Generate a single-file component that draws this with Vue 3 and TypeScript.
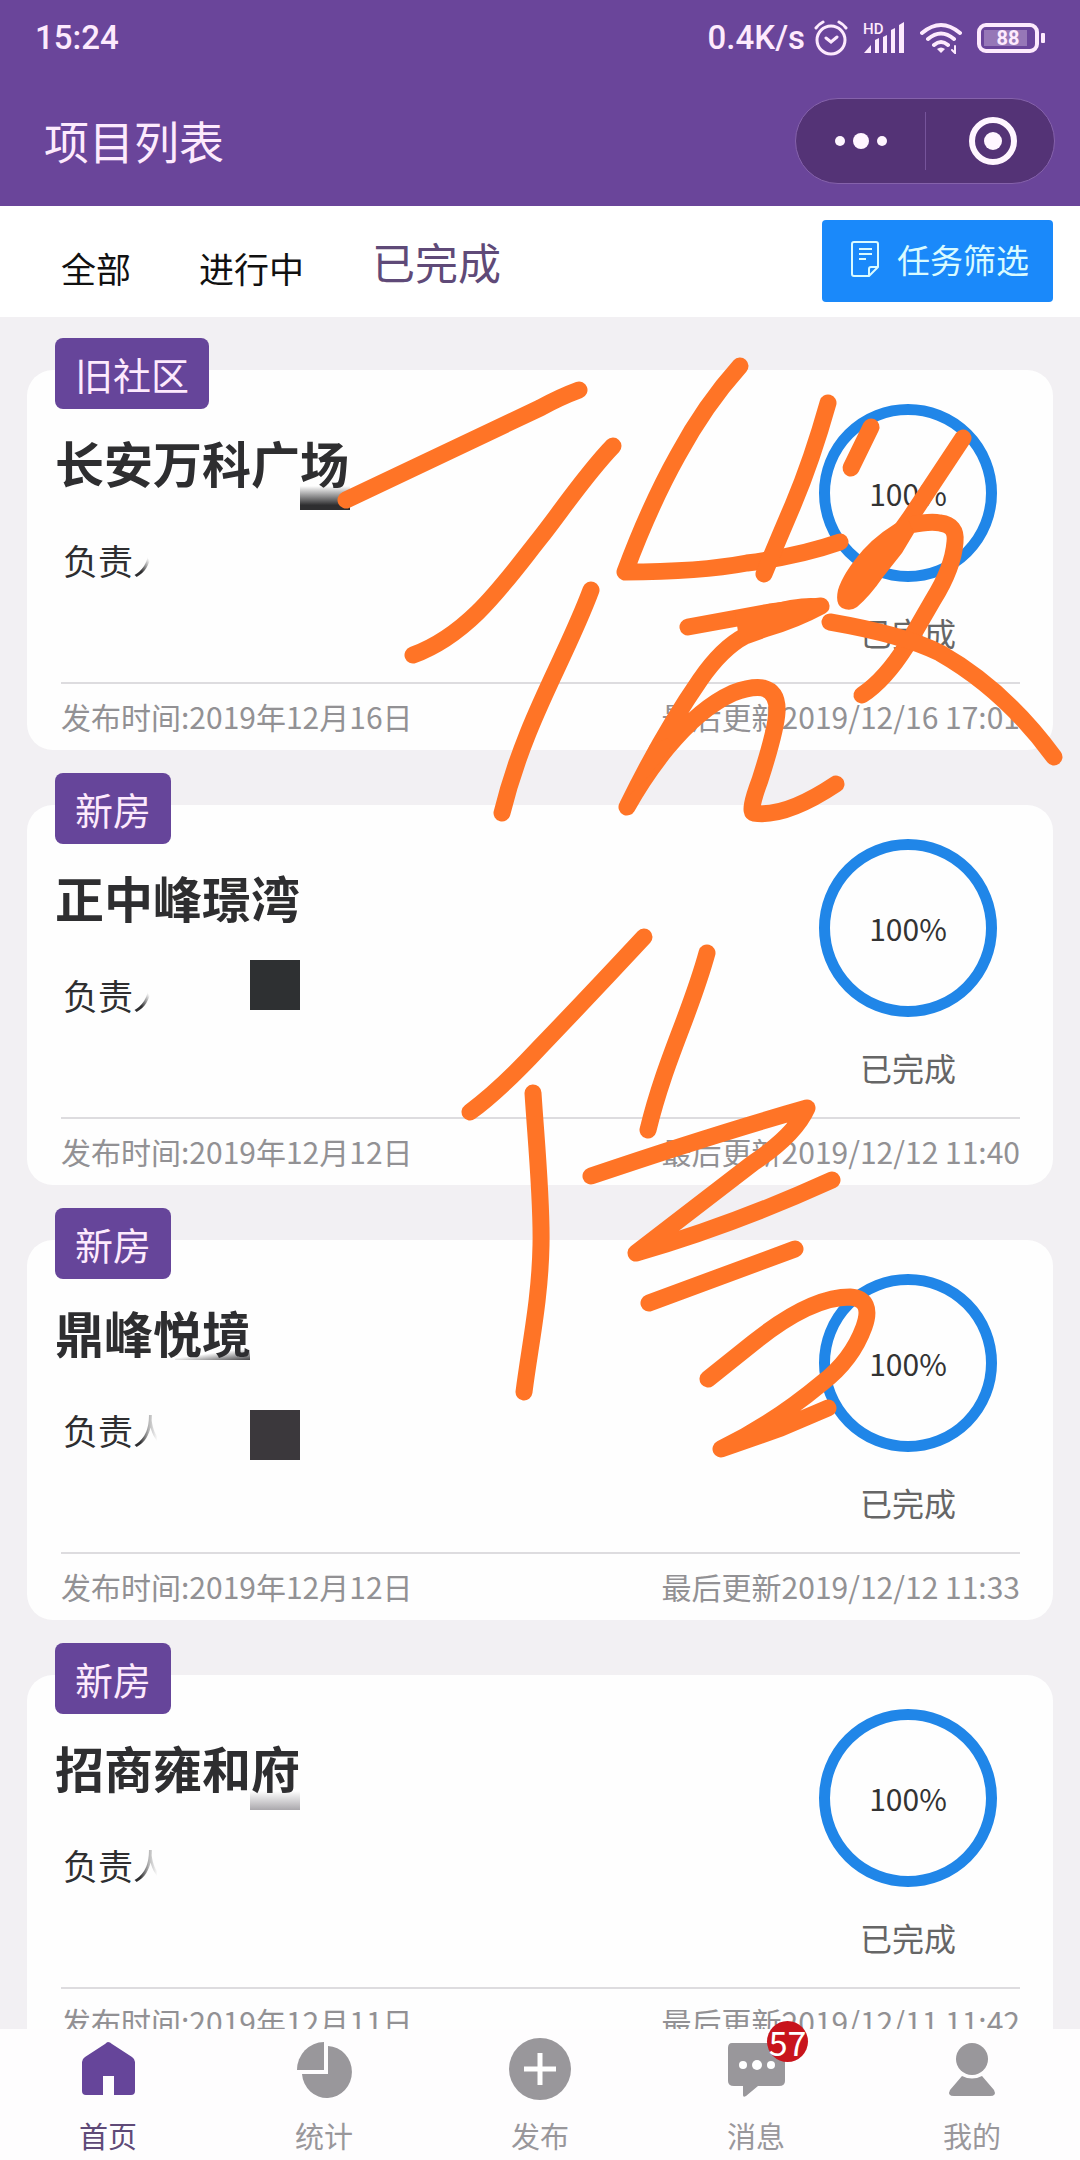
<script setup lang="ts">
import { ref } from 'vue'

interface Project {
  kind: string
  name: string
  published: string
  updated: string
  percent: number
  fade: 'short' | 'long'
}

const projects: Project[] = [
  { kind: '旧社区', name: '长安万科广场', published: '2019年12月16日', updated: '2019/12/16 17:01', percent: 100, fade: 'short' },
  { kind: '新房', name: '正中峰璟湾', published: '2019年12月12日', updated: '2019/12/12 11:40', percent: 100, fade: 'short' },
  { kind: '新房', name: '鼎峰悦境', published: '2019年12月12日', updated: '2019/12/12 11:33', percent: 100, fade: 'long' },
  { kind: '新房', name: '招商雍和府', published: '2019年12月11日', updated: '2019/12/11 11:42', percent: 100, fade: 'long' },
]

const filters = ['全部', '进行中', '已完成']
const activeFilter = ref('已完成')

const tabs = [
  { id: 'home', label: '首页' },
  { id: 'stats', label: '统计' },
  { id: 'publish', label: '发布' },
  { id: 'message', label: '消息', badge: 57 },
  { id: 'mine', label: '我的' },
]
const activeTab = ref('home')

const strokes = [
  'M579 390 Q560 397 540 408 L346 500',
  'M613 446 C585 475 560 513 540 538 C505 582 470 634 413 655',
  'M591 590 C565 660 525 720 502 813',
  'M740 366 Q705 405 678 455 Q650 505 625 572 Q700 572 747 563 Q800 556 840 542',
  'M828 403 Q812 460 793 505 Q778 540 764 574',
  'M871 427 L851 468',
  'M963 438 L910 518 L880 560',
  'M910 525 Q930 521 940 523 Q957 525 955 542 Q953 568 933 600 L907 645 Q885 680 862 695',
  'M830 622 Q905 635 940 653 Q1005 690 1054 757',
  'M688 627 L770 612 Q800 608 821 606 Q795 620 767 628 L745 636 Q722 648 700 680 Q662 735 627 807 Q645 775 667 748 Q700 708 733 693 Q752 686 763 688 Q778 692 777 712 Q776 730 760 780 Q748 812 754 813 Q785 818 836 784',
  'M644 937 Q590 995 540 1047 Q500 1090 470 1112',
  'M533 1093 C536 1140 542 1200 541 1245 C540 1300 530 1345 524 1392',
  'M707 953 C690 1015 665 1060 648 1130',
  'M591 1176 Q712 1135 807 1108 Q795 1135 753 1163 L636 1253 Q733 1225 832 1180',
  'M795 1249 L649 1303',
  'M708 1379 L753 1343 Q810 1297 850 1297 Q874 1299 864 1327 Q852 1360 822 1383 Q774 1423 721 1449 L781 1428 L828 1408',
]
</script>

<template>
  <div class="screen">
    <header class="top">
      <div class="status">
        <span>15:24</span>
        <div class="status-right">
          <span>0.4K/s</span>
          <div class="status-icons">
            <svg width="34" height="36" viewBox="0 0 34 36" fill="none" stroke="currentColor" stroke-width="3" stroke-linecap="round">
              <circle cx="17" cy="20" r="14" />
              <path d="M12 18l5 4 6-5M2 8q3-4 7-6M32 8q-3-4-7-6" />
            </svg>
            <svg width="42" height="36" viewBox="0 0 42 36" fill="currentColor">
              <text x="0" y="14" font-size="15">HD</text>
              <path d="M1 33l7-8v8zM12 20l4-2v15h-4zM20 17l4-2v18h-4zM28 10l4-2v25h-4zM36 5l5-3v31h-5z" />
            </svg>
            <svg width="42" height="32" viewBox="0 0 42 32" fill="none" stroke="currentColor" stroke-width="4" stroke-linecap="round">
              <path d="M2 11Q21-5 40 11M8 17Q21 6 34 17M14 23Q21 17 28 23" />
              <path d="M17 27q4-3 8 0l-4 4z" fill="currentColor" stroke="none" />
              <path d="M35 24v7l-3-3" stroke-width="2" />
            </svg>
            <svg width="68" height="30" viewBox="0 0 68 30">
              <rect x="2" y="2" width="58" height="26" rx="7" fill="none" stroke="currentColor" stroke-width="4" />
              <rect x="7" y="7" width="43" height="16" fill="currentColor" opacity=".3" />
              <rect x="64" y="10" width="4" height="10" rx="1" fill="currentColor" />
              <text x="31" y="22" font-size="20" font-weight="700" text-anchor="middle" fill="currentColor">88</text>
            </svg>
          </div>
        </div>
      </div>
      <div class="navbar">
        <h1>项目列表</h1>
        <div class="capsule">
          <button type="button" aria-label="更多">
            <svg width="52" height="20" viewBox="0 0 52 20" fill="currentColor">
              <circle cx="5" cy="10" r="5" /><circle cx="26" cy="10" r="8" /><circle cx="47" cy="10" r="5" />
            </svg>
          </button>
          <button type="button" aria-label="关闭">
            <svg width="48" height="48" viewBox="0 0 48 48">
              <circle cx="24" cy="24" r="21" fill="none" stroke="currentColor" stroke-width="6" />
              <circle cx="24" cy="24" r="9" fill="currentColor" />
            </svg>
          </button>
        </div>
      </div>
    </header>

    <div class="toolbar">
      <div class="filters">
        <button
          v-for="f in filters"
          :key="f"
          type="button"
          :class="{ active: f === activeFilter }"
          @click="activeFilter = f"
        >{{ f }}</button>
      </div>
      <button type="button" class="task-filter">
        <svg width="28" height="36" viewBox="0 0 28 36" fill="none" stroke="currentColor" stroke-width="2" stroke-linejoin="round">
          <path d="M3 1h22q2 0 2 2v23l-9 9H3q-2 0-2-2V3q0-2 2-2zM18 35v-7q0-2 2-2h7M8 8h13M8 13h13M8 18h7" />
        </svg>
        <span>任务筛选</span>
      </button>
    </div>

    <main class="list">
      <article v-for="p in projects" :key="p.name" class="card">
        <div class="body">
          <div class="info">
            <span class="tag">{{ p.kind }}</span>
            <h2>{{ p.name }}</h2>
            <p class="owner">负责<span :class="p.fade">人</span></p>
          </div>
          <div class="progress">
            <div class="ring">{{ p.percent }}%</div>
            <span class="state">已完成</span>
          </div>
        </div>
        <footer>
          <span>发布时间:{{ p.published }}</span>
          <span>最后更新{{ p.updated }}</span>
        </footer>
      </article>
    </main>

    <nav class="tabbar">
      <button
        v-for="t in tabs"
        :key="t.id"
        type="button"
        :class="{ active: t.id === activeTab }"
        @click="activeTab = t.id"
      >
        <span class="icon">
          <svg width="62" height="62" viewBox="0 0 62 62" fill="currentColor">
            <path v-if="t.id === 'home'" d="M31 4q2 0 4 2l20 13q3 2 3 5v29q0 4-4 4H37V38H26v19H9q-4 0-4-4V24q0-3 3-5L28 6q2-2 3-2z" />
            <template v-else-if="t.id === 'stats'">
              <path d="M31 4v28H4A27 28 0 0 1 31 4z" />
              <path d="M35 8A25 26 0 1 1 9 36h26z" />
            </template>
            <template v-else-if="t.id === 'publish'">
              <circle cx="31" cy="31" r="31" />
              <path d="M31 15v32M15 31h32" stroke="#fff" stroke-width="5" />
            </template>
            <template v-else-if="t.id === 'message'">
              <path d="M7 5h47q6 0 6 5v33q0 5-6 5H33L21 58q-3 2-3-1v-9H9q-6 0-6-5V10q0-5 4-5z" />
              <g fill="#fff"><circle cx="18" cy="27" r="4" /><circle cx="32" cy="27" r="5" /><circle cx="46" cy="27" r="4" /></g>
            </template>
            <template v-else>
              <circle cx="31" cy="21" r="16" />
              <path d="M21 38q10 5 20 0l12 14q3 6-4 6H13q-7 0-4-6z" />
            </template>
          </svg>
          <span v-if="t.badge" class="badge">{{ t.badge }}</span>
        </span>
        <span class="label">{{ t.label }}</span>
      </button>
    </nav>

    <svg class="ink" viewBox="0 0 1080 2160" preserveAspectRatio="xMidYMin meet" aria-hidden="true">
      <defs>
        <linearGradient id="smudge" x1="0" y1="0" x2="0" y2="1">
          <stop offset="0" stop-color="#2e2e30" stop-opacity="0" />
          <stop offset=".8" stop-color="#2e2e30" />
        </linearGradient>
        <linearGradient id="smudge-corner" x1="0" y1="0" x2="1" y2="1">
          <stop offset=".4" stop-color="#2e2e30" stop-opacity="0" />
          <stop offset="1" stop-color="#2e2e30" stop-opacity=".9" />
        </linearGradient>
        <linearGradient id="smudge-light" x1="0" y1="0" x2="0" y2="1">
          <stop offset="0" stop-color="#aaa8ac" stop-opacity="0" />
          <stop offset="1" stop-color="#aaa8ac" />
        </linearGradient>
      </defs>
      <rect x="300" y="486" width="50" height="24" fill="url(#smudge)" />
      <g fill="none" stroke="#ff7426" stroke-width="17" stroke-linecap="round" stroke-linejoin="round">
        <path v-for="(d, i) in strokes" :key="i" :d="d" />
      </g>
      <path fill="#ff7426" d="M907 517Q880 531 863 550Q843 573 838 590Q835 604 842 608Q850 612 857 607Q870 596 883 577L902 553L914 533zM735 612L790 600Q815 596 824 600L828 610L785 630L740 645zM624 800L650 745L668 738L672 746L650 775z" />
      <rect x="250" y="960" width="50" height="50" fill="#2e3032" />
      <rect x="175" y="1350" width="75" height="10" fill="url(#smudge-corner)" />
      <rect x="250" y="1410" width="50" height="50" fill="#3b383c" />
      <rect x="250" y="1791" width="50" height="19" fill="url(#smudge-light)" />
    </svg>
  </div>
</template>

<style>
body {
  margin: 0;
}
</style>

<style scoped>
.screen {
  position: relative;
  display: flex;
  flex-direction: column;
  height: 100vh;
  overflow: hidden;
  background: #f2f0f3;
  color: #2e2e30;
  font-family: "Noto Sans CJK SC", "Noto Sans", sans-serif;
}

button {
  margin: 0;
  padding: 0;
  border: 0;
  background: none;
  color: inherit;
  font: inherit;
  cursor: pointer;
}

svg {
  display: block;
}

h1,
h2,
p {
  margin: 0;
}

.top {
  background: #6a459a;
  color: #fdeafd;
}

.status {
  display: flex;
  align-items: center;
  justify-content: space-between;
  height: 76px;
  padding: 0 35px;
  font: 500 33px/40px Roboto, sans-serif;
}

.status-right {
  display: flex;
  align-items: center;
  gap: 9px;
}

.status-icons {
  display: flex;
  align-items: center;
  gap: 15px;
}

.navbar {
  display: flex;
  align-items: center;
  justify-content: space-between;
  height: 130px;
  padding: 0 25px 0 44px;
}

.navbar h1 {
  font-size: 45px;
  line-height: 60px;
  font-weight: 400;
}

.capsule {
  display: flex;
  align-items: center;
  box-sizing: border-box;
  width: 260px;
  height: 86px;
  border: 1px solid #8562ab;
  border-radius: 43px;
  background: #543376;
  color: #fff6ff;
}

.capsule button {
  display: grid;
  place-items: center;
  flex: none;
  width: 50%;
  height: 58px;
}

.capsule button + button {
  padding-left: 6px;
  border-left: 1px solid #76549b;
}

.toolbar {
  display: flex;
  align-items: center;
  justify-content: space-between;
  height: 109px;
  padding: 0 27px 2px 61px;
  background: #fff;
}

.filters {
  display: flex;
  align-items: flex-end;
  gap: 68px;
  height: 54px;
  color: #111;
  font-size: 35px;
  line-height: 40px;
}

.filters .active {
  color: #5f4a78;
  font-size: 43px;
  line-height: 53px;
}

.task-filter {
  display: flex;
  align-items: center;
  gap: 18px;
  height: 82px;
  padding: 0 24px 3px 29px;
  border-radius: 4px;
  background: #1a89fa;
  color: #d9fbff;
  font-size: 33px;
  line-height: 40px;
}

.list {
  display: flex;
  flex: 1;
  flex-direction: column;
  gap: 55px;
  min-height: 0;
  padding: 53px 27px 0;
  overflow: hidden;
}

.card {
  flex: none;
  padding-bottom: 14px;
  border-radius: 26px;
  background: #fefefe;
}

.body {
  display: flex;
  justify-content: space-between;
  height: 312px;
  padding: 0 56px 0 28px;
}

.info {
  display: flex;
  flex-direction: column;
  align-items: flex-start;
}

.tag {
  margin-top: -32px;
  padding: 0 20px;
  border-radius: 8px;
  background: #66459a;
  color: #fdeafd;
  font-size: 38px;
  line-height: 71px;
}

.info h2 {
  margin-top: 23px;
  font-size: 49px;
  line-height: 60px;
  font-weight: 700;
}

.owner {
  margin-top: 48px;
  padding-left: 8px;
  font-size: 35px;
  line-height: 40px;
}

.owner .short {
  mask-image: linear-gradient(to top right, #000 25%, transparent 48%);
}

.owner .long {
  mask-image: linear-gradient(to right, #000 20%, rgba(0, 0, 0, 0.35) 45%, transparent 70%);
}

.progress {
  display: flex;
  flex-direction: column;
  align-items: center;
  gap: 30px;
  padding-top: 34px;
}

.ring {
  display: grid;
  place-items: center;
  box-sizing: border-box;
  width: 178px;
  height: 178px;
  border: 11px solid #2086e8;
  border-radius: 50%;
  color: #333;
  font-size: 30px;
  line-height: 40px;
}

.state {
  color: #666;
  font-size: 32px;
  line-height: 40px;
}

footer {
  display: flex;
  justify-content: space-between;
  margin: 0 33px 0 34px;
  padding-top: 12px;
  border-top: 2px solid #dddcdf;
  color: #929194;
  font-size: 30px;
  line-height: 40px;
}

.tabbar {
  display: flex;
  flex: none;
  background: #fefdfe;
}

.tabbar button {
  display: flex;
  flex: 1;
  flex-direction: column;
  align-items: center;
  gap: 17px;
  padding: 9px 0 7px;
  color: #99979b;
  font-size: 29px;
  line-height: 36px;
}

.tabbar .active {
  color: #66459a;
}

.tabbar .active .label {
  color: #5f4a78;
}

.icon {
  position: relative;
}

.badge {
  position: absolute;
  top: -17px;
  right: -21px;
  width: 41px;
  height: 41px;
  border-radius: 50%;
  background: #c8141c;
  color: #fff;
  font-size: 34px;
  line-height: 41px;
  text-align: center;
}

.ink {
  position: absolute;
  top: 0;
  left: 0;
  width: 100%;
  pointer-events: none;
}
</style>
